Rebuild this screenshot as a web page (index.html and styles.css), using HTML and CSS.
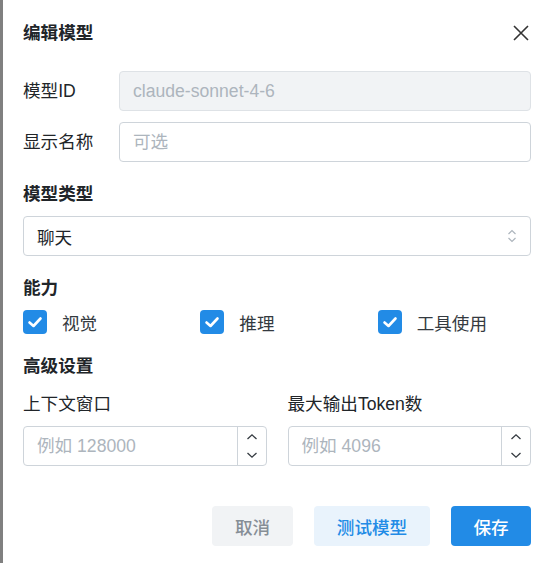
FILE: index.html
```html
<!DOCTYPE html>
<html>
<head>
<meta charset="utf-8" />
<meta name="viewport" content="width=device-width, initial-scale=1.0">
<link rel="stylesheet" href="styles.css">
</head>
<body>
<div class="backdrop-edge"></div>
<main class="dialog">
  <header class="dialog-head">
    <h2 class="dialog-title">编辑模型</h2>
    <button class="btn-close" title="关闭">
      <svg width="16" height="16" viewBox="0 0 16 16"><path d="M1 1L15 15M15 1L1 15" stroke="#333" stroke-width="1.6" fill="none"/></svg>
    </button>
  </header>

  <div class="field-row">
    <label class="field-label" for="model-id">模型ID</label>
    <input class="input input-disabled" id="model-id" value="claude-sonnet-4-6" disabled />
  </div>
  <div class="field-row">
    <label class="field-label" for="model-name">显示名称</label>
    <input class="input" id="model-name" placeholder="可选" />
  </div>

  <h3 class="section-title">模型类型</h3>
  <div class="select">
    <span>聊天</span>
    <svg width="12" height="16" viewBox="0 0 12 16"><path d="M2.5 6L6 2.5L9.5 6M2.5 10L6 13.5L9.5 10" stroke="#adb5bd" stroke-width="1.2" fill="none"/></svg>
  </div>

  <h3 class="section-title">能力</h3>
  <div class="checks">
    <label class="check"><span class="check-box"><svg width="24" height="24" viewBox="0 0 24 24"><path d="M6.5 12.5L10.5 16L17.5 8.5" stroke="#fff" stroke-width="2.6" fill="none" stroke-linecap="round" stroke-linejoin="round"/></svg></span>视觉</label>
    <label class="check"><span class="check-box"><svg width="24" height="24" viewBox="0 0 24 24"><path d="M6.5 12.5L10.5 16L17.5 8.5" stroke="#fff" stroke-width="2.6" fill="none" stroke-linecap="round" stroke-linejoin="round"/></svg></span>推理</label>
    <label class="check"><span class="check-box"><svg width="24" height="24" viewBox="0 0 24 24"><path d="M6.5 12.5L10.5 16L17.5 8.5" stroke="#fff" stroke-width="2.6" fill="none" stroke-linecap="round" stroke-linejoin="round"/></svg></span>工具使用</label>
  </div>

  <h3 class="section-title">高级设置</h3>
  <div class="num-grid">
    <div>
      <label class="num-label">上下文窗口</label>
      <div class="num-input">
        <input class="num-field" placeholder="例如 128000" />
        <div class="num-controls">
          <svg width="12" height="8" viewBox="0 0 12 8"><path d="M1.5 6L6 1.8L10.5 6" stroke="#343a40" stroke-width="1.3" fill="none"/></svg>
          <svg width="12" height="8" viewBox="0 0 12 8"><path d="M1.5 2L6 6.2L10.5 2" stroke="#343a40" stroke-width="1.3" fill="none"/></svg>
        </div>
      </div>
    </div>
    <div>
      <label class="num-label">最大输出Token数</label>
      <div class="num-input">
        <input class="num-field" placeholder="例如 4096" />
        <div class="num-controls">
          <svg width="12" height="8" viewBox="0 0 12 8"><path d="M1.5 6L6 1.8L10.5 6" stroke="#343a40" stroke-width="1.3" fill="none"/></svg>
          <svg width="12" height="8" viewBox="0 0 12 8"><path d="M1.5 2L6 6.2L10.5 2" stroke="#343a40" stroke-width="1.3" fill="none"/></svg>
        </div>
      </div>
    </div>
  </div>

  <footer class="actions">
    <button class="btn btn-cancel">取消</button>
    <button class="btn btn-test">测试模型</button>
    <button class="btn btn-save">保存</button>
  </footer>
</main>
</body>
</html>
```

FILE: styles.css
```css
:root {--blue: #228be6; --border: #ced4da; --text: #212529; --placeholder: #adb5bd; --fs: 17.6px;}
html, body {margin: 0; height: 100%;}
body {display: flex; background: #fff; color: var(--text); font-family: "Liberation Sans", "Noto Sans CJK SC", sans-serif; font-size: var(--fs);}
.backdrop-edge {width: 3px; flex: none; background: #808080;}
.dialog {flex: 1; min-width: 0; padding: 20px 15px 0 20px;}
.dialog-head {display: flex; align-items: center; justify-content: space-between; height: 26px; margin-bottom: 25px;}
.dialog-title {margin: 0; font-size: var(--fs); font-weight: 700; line-height: 26px;}
.btn-close {border: 0; background: none; padding: 0; margin-right: 2px; width: 16px; height: 16px; display: flex;}
.field-row {display: grid; grid-template-columns: 96px minmax(0, 1fr); align-items: center;}
.field-row + .field-row {margin-top: 11px;}
.field-label {line-height: 26px;}
.input {box-sizing: border-box; height: 40px; width: 100%; min-width: 0; border: 1px solid var(--border); border-radius: 4px; padding: 0 13px; font: inherit; color: var(--text); background: #fff; outline: none;}
.input::placeholder, .num-field::placeholder {color: var(--placeholder);}
.input-disabled {background: #f1f3f5; color: #adb5bd; border-color: #dee2e6;}
.section-title {margin: 19px 0 9px; font-size: var(--fs); font-weight: 700; line-height: 26px;}
.select {box-sizing: border-box; height: 40px; border: 1px solid var(--border); border-radius: 4px; padding: 0 12px 0 13px; display: flex; align-items: center; justify-content: space-between;}
.checks {display: grid; grid-template-columns: repeat(3, minmax(0, 1fr)); gap: 24px;}
.check {display: flex; align-items: center; gap: 15px; height: 24px; color: #343a40;}
.check-box {width: 24px; height: 24px; border-radius: 4px; background: var(--blue); display: flex;}
.num-grid {display: grid; grid-template-columns: minmax(0, 1fr) minmax(0, 1fr); gap: 21px; padding-top: 3px;}
.num-label {display: block; line-height: 26px; margin-bottom: 9px;}
.num-input {box-sizing: border-box; height: 40px; border: 1px solid var(--border); border-radius: 4px; display: flex;}
.num-field {flex: 1; min-width: 0; width: 0; border: 0; outline: none; padding: 0 13px; font: inherit; background: none; border-radius: 4px;}
.num-controls {width: 28px; border-left: 1px solid var(--border); display: flex; flex-direction: column; align-items: center; justify-content: space-between; padding: 6px 0;}
.actions {display: flex; justify-content: flex-end; gap: 21px; margin-top: 40px;}
.btn {height: 40px; border: 0; border-radius: 4px; padding: 0; font: inherit; font-weight: 500;}
.btn-cancel {background: #f1f3f5; color: #868e96; width: 81px;}
.btn-test {background: #e9f3fc; color: var(--blue); width: 116px;}
.btn-save {background: var(--blue); color: #fff; width: 80px;}
```
